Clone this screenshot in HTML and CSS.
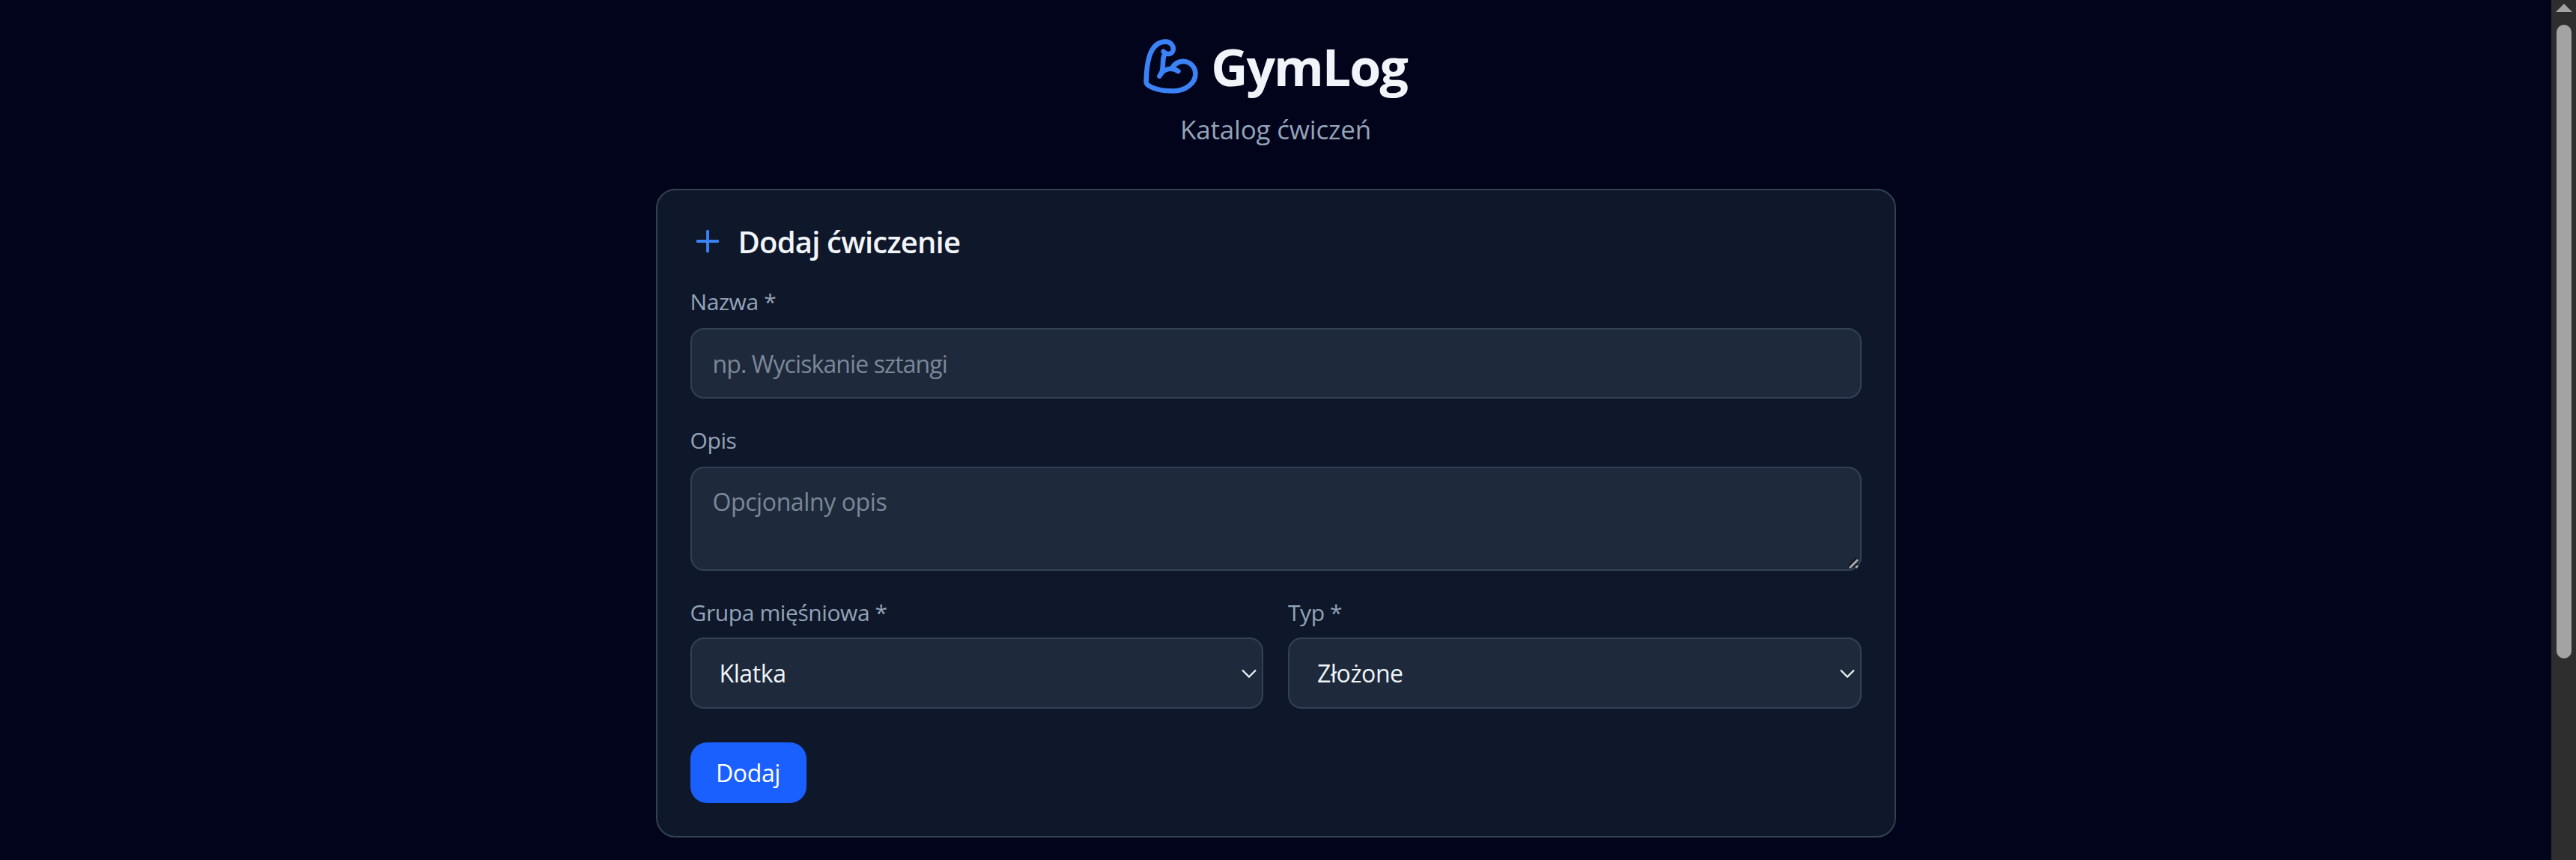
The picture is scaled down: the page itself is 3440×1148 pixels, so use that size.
FILE: index.html
```html
<!DOCTYPE html>
<html lang="pl">
<head>
    <meta charset="UTF-8">
    <meta name="viewport" content="width=device-width, initial-scale=1.0">
    <title>GymLog - Katalog ćwiczeń</title>
    <link rel="stylesheet" href="styles.css">
</head>
<body>
    <main class="page">
        <header class="header">
            <h1 class="title">
                <svg class="logo" viewBox="0 0 24 24" fill="none" stroke="currentColor" stroke-width="2" stroke-linecap="round" stroke-linejoin="round">
                    <path d="M12.409 13.017A5 5 0 0 1 22 15c0 3.866-4 7-9 7-4.077 0-8.153-.82-10.371-2.462-.426-.316-.631-.832-.62-1.362C2.118 12.723 2.627 2 10 2a3 3 0 0 1 3 3 2 2 0 0 1-2 2c-1.105 0-1.64-.444-2-1"/>
                    <path d="M15 14a5 5 0 0 0-7.584 2"/>
                    <path d="M9.964 6.825C8.019 7.977 9.5 13 8 15"/>
                </svg>
                <span>GymLog</span>
            </h1>
            <p class="subtitle">Katalog ćwiczeń</p>
        </header>

        <section class="card">
            <h2 class="card-title">
                <svg class="plus" viewBox="0 0 24 24" fill="none" stroke="currentColor" stroke-width="2" stroke-linecap="round">
                    <path d="M5 12h14"/>
                    <path d="M12 5v14"/>
                </svg>
                <span>Dodaj ćwiczenie</span>
            </h2>

            <form class="form">
                <div class="field">
                    <label class="label" for="name">Nazwa *</label>
                    <input class="control control-name" id="name" type="text" placeholder="np. Wyciskanie sztangi">
                </div>

                <div class="field">
                    <label class="label" for="description">Opis</label>
                    <div class="control-wrap">
                        <textarea class="control control-area" id="description" placeholder="Opcjonalny opis"></textarea>
                        <svg class="grip" viewBox="0 0 16 16">
                            <path class="grip-shadow" d="M1 13 12 2M9 14l4-4"/>
                            <path class="grip-line" d="M2 14 13 3M10 14l3-3"/>
                        </svg>
                    </div>
                </div>

                <div class="field-row">
                    <div class="field field-select">
                        <label class="label" for="group">Grupa mięśniowa *</label>
                        <div class="control-wrap">
                            <select class="control control-select" id="group">
                                <option>Klatka</option>
                                <option>Plecy</option>
                                <option>Nogi</option>
                                <option>Barki</option>
                            </select>
                            <svg class="chevron" viewBox="0 0 20 12"><path d="M1 1.5l9 9 9-9"/></svg>
                        </div>
                    </div>
                    <div class="field field-select">
                        <label class="label" for="type">Typ *</label>
                        <div class="control-wrap">
                            <select class="control control-select" id="type">
                                <option>Złożone</option>
                                <option>Izolowane</option>
                            </select>
                            <svg class="chevron" viewBox="0 0 20 12"><path d="M1 1.5l9 9 9-9"/></svg>
                        </div>
                    </div>
                </div>

                <button class="button" type="button">Dodaj</button>
            </form>
        </section>
    </main>

    <div class="scrollbar">
        <svg class="scroll-arrow" viewBox="0 0 22 12"><path d="M11 0l11 11H0z"/></svg>
        <div class="scroll-thumb"></div>
    </div>
</body>
</html>
```

FILE: styles.css
```css
* {
    margin: 0;
    padding: 0;
    box-sizing: border-box;
}

body {
    display: flex;
    height: 100vh;
    overflow: hidden;
    background: #01041a;
    color: #f1f5f9;
    font-family: "Open Sans", "Noto Sans", sans-serif;
}

.page {
    flex: 1;
    min-width: 0;
}

.header {
    display: flex;
    flex-direction: column;
    align-items: center;
    padding-top: 44px;
}

.title {
    display: flex;
    align-items: center;
    gap: 14px;
    height: 88px;
    padding-right: 4px;
    font-size: 68px;
    font-weight: 700;
    letter-spacing: -2px;
}

.logo {
    width: 79px;
    height: 79px;
    color: #3b82f6;
}

.subtitle {
    margin-top: 17px;
    font-size: 35px;
    line-height: 48px;
    color: #94a3b8;
    letter-spacing: -0.2px;
}

.card {
    width: 1656px;
    margin: 55px auto 0;
    padding: 44px;
    background: #0f172a;
    border: 2px solid #334155;
    border-radius: 26px;
}

.card-title {
    display: flex;
    align-items: center;
    gap: 18px;
    height: 48px;
    font-size: 40px;
    font-weight: 600;
    letter-spacing: -0.8px;
}

.plus {
    width: 46px;
    height: 46px;
    color: #3b82f6;
}

.form {
    display: flex;
    flex-direction: column;
    gap: 35px;
    margin-top: 36px;
}

.field-row {
    display: grid;
    grid-template-columns: 1fr 1fr;
    gap: 33px;
}

.field {
    display: flex;
    flex-direction: column;
    gap: 14px;
}

.field-select {
    gap: 12px;
}

.label {
    font-size: 30px;
    line-height: 42px;
    color: #94a3b8;
    letter-spacing: -0.4px;
}

.control-wrap {
    position: relative;
    display: flex;
}

.control {
    display: block;
    width: 100%;
    height: 94px;
    padding: 0 28px;
    background: #1e293b;
    border: 2px solid #334155;
    border-radius: 18px;
    color: #f1f5f9;
    font: inherit;
    font-size: 32px;
    letter-spacing: -0.4px;
    outline: none;
}

.control::placeholder {
    color: #7c8799;
    opacity: 1;
}

.control-name {
    letter-spacing: -0.9px;
}

.control-area {
    height: 139px;
    padding-top: 23px;
    resize: none;
}

.control-select {
    height: 95px;
    padding-left: 37px;
    appearance: none;
}

.grip {
    position: absolute;
    right: 2px;
    bottom: 2px;
    width: 16px;
    height: 16px;
    pointer-events: none;
}

.grip-shadow {
    fill: none;
    stroke: #0b0f1a;
    stroke-width: 4;
}

.grip-line {
    fill: none;
    stroke: #a6a6a6;
    stroke-width: 3;
}

.chevron {
    position: absolute;
    top: 50%;
    right: 9px;
    width: 20px;
    height: 12px;
    margin-top: -6px;
    fill: none;
    stroke: #e8edf3;
    stroke-width: 2.4;
    pointer-events: none;
}

.button {
    align-self: flex-start;
    width: 155px;
    height: 81px;
    margin-top: 10px;
    background: #1a5fff;
    border: none;
    border-radius: 22px;
    color: #fff;
    font: inherit;
    font-size: 32px;
    letter-spacing: -0.4px;
}

.scrollbar {
    display: flex;
    flex-direction: column;
    align-items: center;
    flex: none;
    width: 33px;
    background: #2e2e2e;
}

.scroll-arrow {
    width: 22px;
    height: 12px;
    margin-top: 5px;
    fill: #a3a3a3;
}

.scroll-thumb {
    width: 20px;
    height: 846px;
    margin-top: 16px;
    background: #a3a3a3;
    border-radius: 10px;
}
```
